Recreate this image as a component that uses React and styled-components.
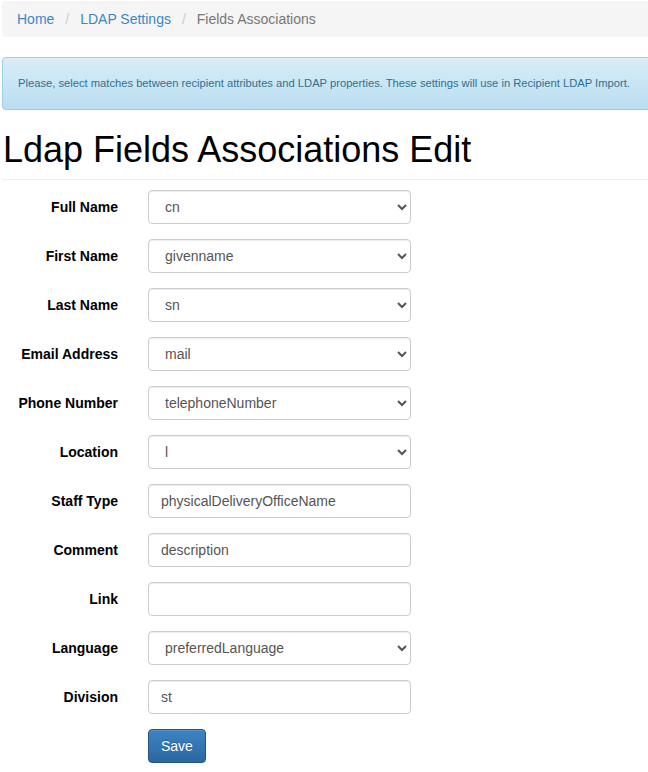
import React from "react";
import styled, { createGlobalStyle } from "styled-components";

const Global = createGlobalStyle`
  html, body { margin: 0; padding: 0; background: #fff; overflow: hidden; }
  body { font-family: "Liberation Sans", Arial, Helvetica, sans-serif; font-size: 14px; line-height: 1.42857; color: #333; }
  * { box-sizing: border-box; }
`;

const Page = styled.div`
  width: 680px;
  padding: 1px 0 0 2px;
`;

const Breadcrumb = styled.ol`
  list-style: none;
  margin: 0 0 20px;
  padding: 8px 15px;
  background: #f5f5f5;
  border-radius: 4px;
  display: flex;
  line-height: 20px;
`;

const Crumb = styled.li`
  color: ${(p) => (p.$active ? "#777" : "#337ab7")};
  &:not(:first-child)::before {
    content: "/\\00a0";
    padding: 0 7px 0 11px;
    color: #ccc;
  }
`;

const CrumbLink = styled.a`
  color: #3c87c6;
  text-decoration: none;
`;

const Alert = styled.div`
  padding: 17px 15px;
  border: 1px solid #9acfea;
  border-radius: 4px;
  background: linear-gradient(to bottom, #d9edf7 0%, #b9def0 100%);
  color: #31708f;
  font-size: 11.2px;
  line-height: 17px;
  margin-bottom: 20px;
  box-shadow: inset 0 1px 0 rgba(255,255,255,.25), 0 1px 2px rgba(0,0,0,.05);
`;

const Title = styled.h1`
  margin: 0;
  padding: 0 0 9px 1px;
  font-size: 36px;
  font-weight: 500;
  line-height: 40px;
  color: #000;
  border-bottom: 1px solid #eee;
`;

const Form = styled.form`
  display: grid;
  grid-template-columns: 116px 263px;
  column-gap: 30px;
  row-gap: 15px;
  padding-top: 10px;
  align-items: center;
`;

const Label = styled.label`
  text-align: right;
  font-weight: bold;
  color: #000;
  font-size: 14px;
  padding-top: 2px;
`;

const controlBase = `
  width: 263px;
  height: 34px;
  border: 1px solid #ccc;
  border-radius: 4px;
  font-family: "Liberation Sans", Arial, Helvetica, sans-serif;
  font-size: 14px;
  color: #555;
  background: #fff;
  box-shadow: inset 0 1px 1px rgba(0,0,0,.075);
  outline: none;
`;

const Select = styled.select`
  ${controlBase}
  padding: 6px 8px 6px 12px;
`;

const Input = styled.input`
  ${controlBase}
  padding: 6px 12px;
`;

const Spacer = styled.div``;

const SaveButton = styled.button`
  justify-self: start;
  height: 34px;
  padding: 6px 12px;
  font-family: "Liberation Sans", Arial, Helvetica, sans-serif;
  font-size: 14px;
  color: #fff;
  border: 1px solid #245580;
  border-radius: 4px;
  background: linear-gradient(to bottom, #3d84c4 0%, #2b67a1 100%);
  text-shadow: 0 -1px 0 rgba(0,0,0,.2);
  box-shadow: inset 0 1px 0 rgba(255,255,255,.15), 0 1px 1px rgba(0,0,0,.075);
  cursor: pointer;
`;

const fields = [
  { label: "Full Name", type: "select", value: "cn" },
  { label: "First Name", type: "select", value: "givenname" },
  { label: "Last Name", type: "select", value: "sn" },
  { label: "Email Address", type: "select", value: "mail" },
  { label: "Phone Number", type: "select", value: "telephoneNumber" },
  { label: "Location", type: "select", value: "l" },
  { label: "Staff Type", type: "input", value: "physicalDeliveryOfficeName" },
  { label: "Comment", type: "input", value: "description" },
  { label: "Link", type: "input", value: "" },
  { label: "Language", type: "select", value: "preferredLanguage" },
  { label: "Division", type: "input", value: "st" },
];

export default function App() {
  return (
    <Page>
      <Global />
      <Breadcrumb>
        <Crumb><CrumbLink href="#">Home</CrumbLink></Crumb>
        <Crumb><CrumbLink href="#">LDAP Settings</CrumbLink></Crumb>
        <Crumb $active>Fields Associations</Crumb>
      </Breadcrumb>
      <Alert>
        Please, select matches between recipient attributes and LDAP properties. These settings will use in Recipient LDAP Import.
      </Alert>
      <Title>Ldap Fields Associations Edit</Title>
      <Form onSubmit={(e) => e.preventDefault()}>
        {fields.map((f) => (
          <React.Fragment key={f.label}>
            <Label>{f.label}</Label>
            {f.type === "select" ? (
              <Select defaultValue={f.value}>
                <option value={f.value}>{f.value}</option>
              </Select>
            ) : (
              <Input type="text" defaultValue={f.value} />
            )}
          </React.Fragment>
        ))}
        <Spacer />
        <SaveButton type="submit">Save</SaveButton>
      </Form>
    </Page>
  );
}
